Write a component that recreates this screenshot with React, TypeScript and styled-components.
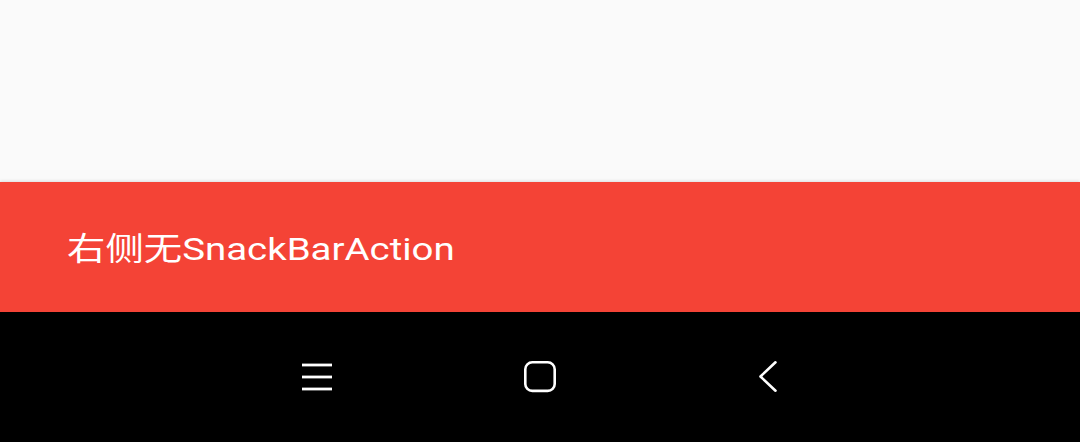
import React from "react";
import styled, { createGlobalStyle } from "styled-components";

const Global = createGlobalStyle`
  html, body { margin: 0; padding: 0; }
  body { width: 1080px; height: 442px; overflow: hidden; background: #fafafa; }
`;

const Screen = styled.div`
  width: 1080px;
  height: 442px;
  display: flex;
  flex-direction: column;
  background: #fafafa;
`;

const Content = styled.div`
  flex: 0 0 182px;
  background: #fafafa;
`;

const SnackBar = styled.div`
  flex: 0 0 130px;
  background: #f44336;
  display: flex;
  align-items: center;
  padding-left: 67px;
  box-shadow: 0 -1px 3px rgba(0, 0, 0, 0.12);
  position: relative;
  z-index: 1;
`;

const Message = styled.span`
  display: inline-block;
  color: #ffffff;
  font-family: Roboto, "Noto Sans CJK SC", sans-serif;
  font-size: 32px;
  line-height: 1;
  padding-top: 3px;
  white-space: nowrap;
  transform: scaleX(1.2);
  transform-origin: left center;
`;

const NavBar = styled.div`
  flex: 0 0 130px;
  background: #000000;
  display: flex;
  align-items: center;
  justify-content: center;
  gap: 161px;
`;

const NavButton = styled.div`
  width: 64px;
  height: 64px;
  display: flex;
  align-items: center;
  justify-content: center;
  svg { display: block; }
`;

const MenuIcon = () => (
  <svg width="64" height="64" viewBox="0 0 64 64" fill="none" stroke="#fff" strokeWidth="2.8">
    <line x1="19" y1="20" x2="49" y2="20" />
    <line x1="19" y1="32" x2="49" y2="32" />
    <line x1="19" y1="44" x2="49" y2="44" />
  </svg>
);

const HomeIcon = () => (
  <svg width="64" height="64" viewBox="0 0 64 64" fill="none" stroke="#fff" strokeWidth="2.6">
    <rect x="17.3" y="17.3" width="29.4" height="28.6" rx="7" />
  </svg>
);

const BackIcon = () => (
  <svg width="64" height="64" viewBox="0 0 64 64" fill="none" stroke="#fff" strokeWidth="2.6" strokeLinecap="round" strokeLinejoin="round">
    <polyline points="42.5,17.3 27.5,31.5 42.5,45.7" />
  </svg>
);

export default function App() {
  return (
    <>
      <Global />
      <Screen>
        <Content />
        <SnackBar>
          <Message>右侧无SnackBarAction</Message>
        </SnackBar>
        <NavBar>
          <NavButton><MenuIcon /></NavButton>
          <NavButton><HomeIcon /></NavButton>
          <NavButton><BackIcon /></NavButton>
        </NavBar>
      </Screen>
    </>
  );
}
